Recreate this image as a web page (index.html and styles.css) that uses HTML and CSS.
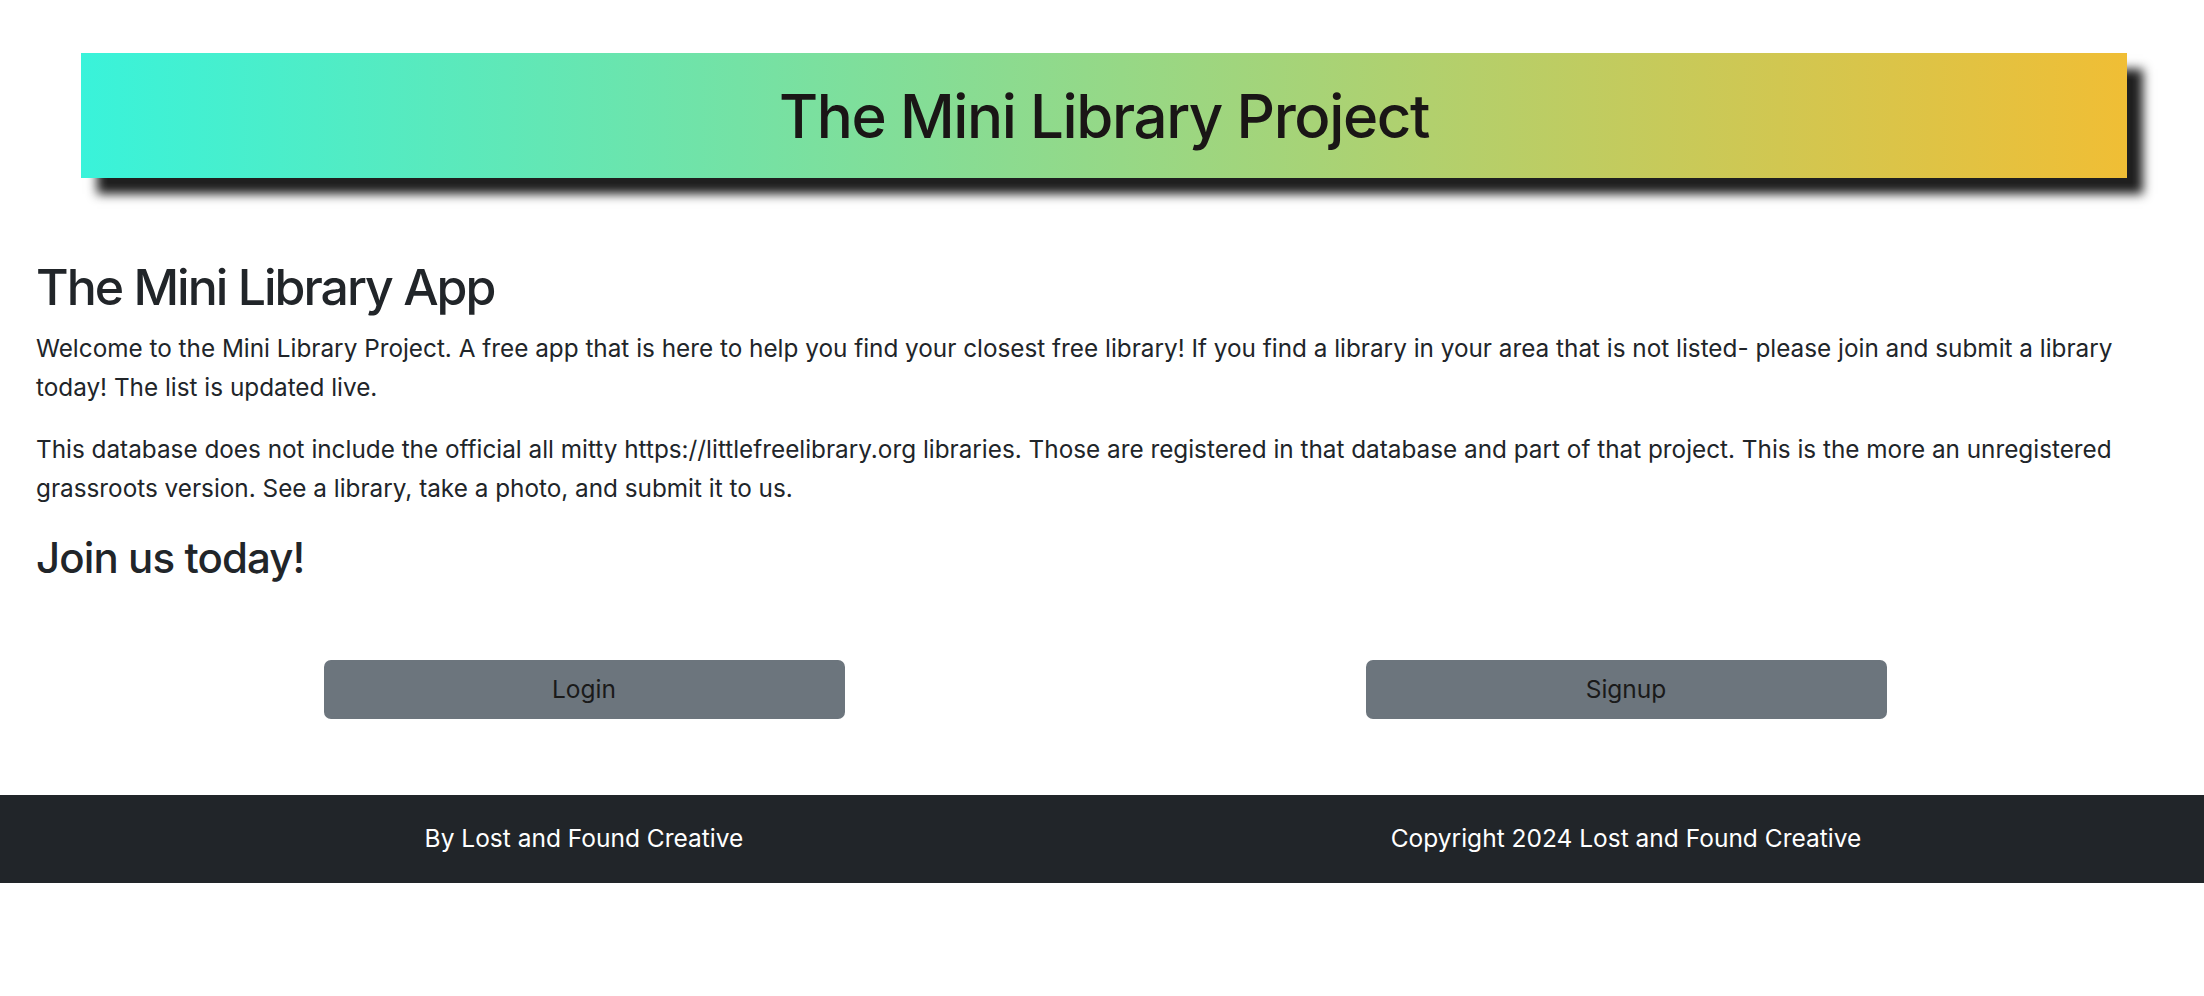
FILE: index.html
```html
<!DOCTYPE html>
<html lang="en">
<head>
<meta charset="utf-8">
<title>The Mini Library Project</title>
<link rel="stylesheet" href="styles.css">
</head>
<body>
  <header class="banner">
    <h1 class="banner-title">The Mini Library Project</h1>
  </header>
  <main class="content">
    <h1 class="page-title">The Mini Library App</h1>
    <p class="lead-text">Welcome to the Mini Library Project. A free app that is here to help you find your closest free library! If you find a library in your area that is not listed- please join and submit a library today! The list is updated live.</p>
    <p class="lead-text">This database does not include the official all mitty https://littlefreelibrary.org libraries. Those are registered in that database and part of that project. This is the more an unregistered grassroots version. See a library, take a photo, and submit it to us.</p>
    <h2 class="join-title">Join us today!</h2>
  </main>
  <div class="two-col actions">
    <div class="col"><a class="btn" href="#">Login</a></div>
    <div class="col"><a class="btn" href="#">Signup</a></div>
  </div>
  <footer class="footer">
    <div class="two-col">
      <div class="col">By Lost and Found Creative</div>
      <div class="col">Copyright 2024 Lost and Found Creative</div>
    </div>
  </footer>
</body>
</html>
```

FILE: styles.css
```css
* { box-sizing: border-box; }

body {
  margin: 0;
  font-family: Inter, "Noto Sans", "Liberation Sans", sans-serif;
  font-size: 24.5px;
  line-height: 39.4px;
  color: #212529;
  background: #fff;
}

.banner {
  margin: 53px 77px 0 81px;
  height: 125px;
  display: flex;
  align-items: center;
  justify-content: center;
  background: linear-gradient(to right, #39f3da, #f0be35);
  box-shadow: 16px 16px 10px #1f1f1f;
}

.banner-title {
  margin: 0;
  font-size: 60px;
  font-weight: 500;
  line-height: 1.2;
  color: #1a1616;
  letter-spacing: -1.4px;
}

.content {
  padding: 0 36px;
}

.page-title {
  margin: 76px 0 8px;
  font-size: 50px;
  font-weight: 500;
  line-height: 67px;
  letter-spacing: -2px;
}

.lead-text {
  margin: 0 0 22px;
  font-size: 24.3px;
}

.join-title {
  margin: 0;
  font-size: 42px;
  font-weight: 500;
  line-height: 54px;
  letter-spacing: -0.9px;
}

.two-col {
  display: grid;
  grid-template-columns: 1fr 1fr;
  padding: 0 57px 0 63px;
}

.col {
  display: flex;
  justify-content: center;
  align-items: center;
}

.actions {
  margin-top: 75px;
}

.btn {
  display: flex;
  align-items: center;
  justify-content: center;
  width: 50%;
  height: 59px;
  padding-top: 2px;
  background: #6c757d;
  border-radius: 7px;
  color: #1a1a1a;
  text-decoration: none;
}

.footer {
  margin-top: 76px;
  height: 88px;
  background: #212529;
  color: #fff;
  display: flex;
  flex-direction: column;
  justify-content: center;
}
```
